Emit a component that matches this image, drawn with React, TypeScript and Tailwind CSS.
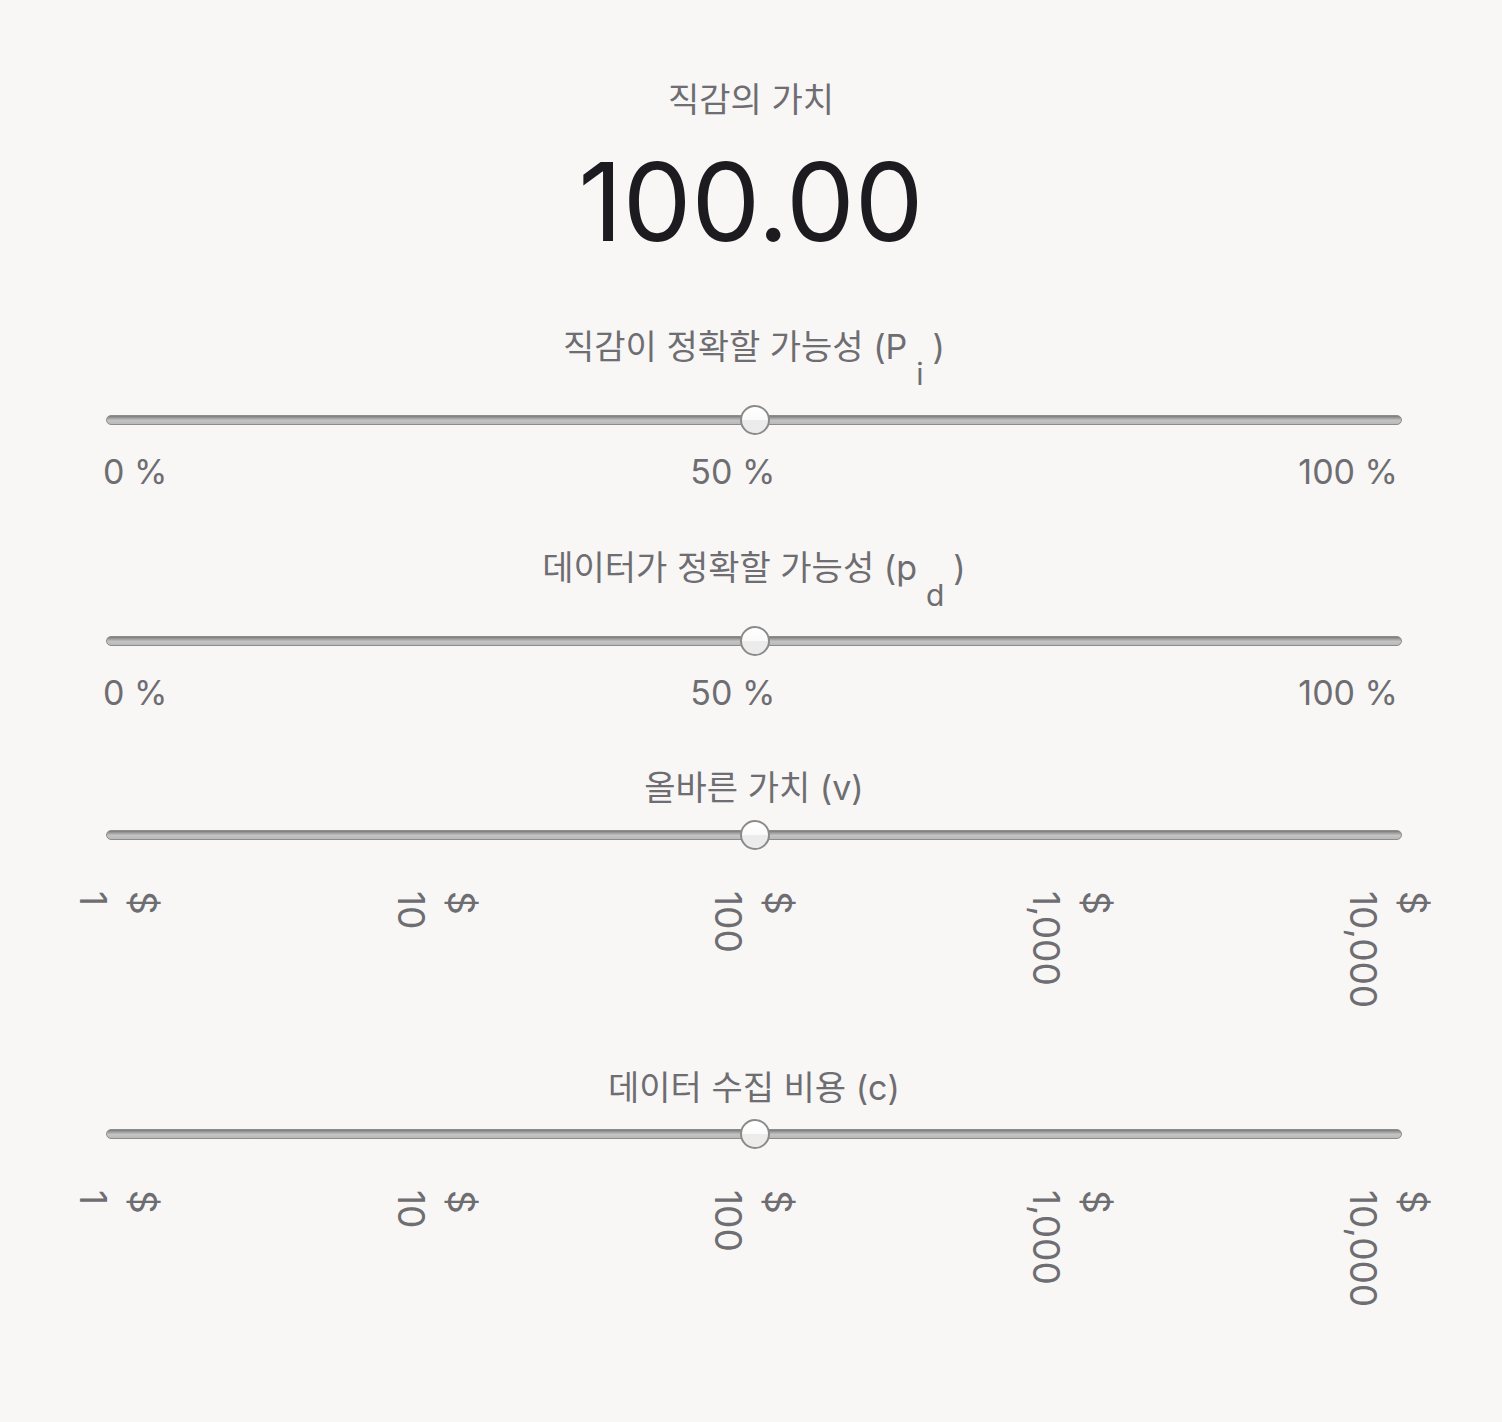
import React from 'react';

const font = { fontFamily: 'Inter, "Noto Sans CJK KR", sans-serif' };

function Track() {
  return (
    <div className="relative h-[30px] flex items-center">
      <div className="w-full h-[10px] rounded-full border border-[#8c8c8c] bg-[linear-gradient(to_bottom,#7a7a7a_0%,#9e9e9e_25%,#c4c4c4_55%,#b9b9b9_100%)]" />
      {/* 손잡이 */}
      <div className="absolute left-1/2 top-0 -translate-x-[calc(50%-1px)] w-[30px] h-[30px] rounded-full border-2 border-[#8a8a8a] bg-[linear-gradient(to_bottom,#ffffff_0%,#fafafa_50%,#ebebeb_52%,#ececec_100%)]" />
    </div>
  );
}

function PercentTicks() {
  return (
    <div className="flex justify-between -ml-[3px] mr-[4px] mt-[10px] text-[34px] leading-[54px] text-[#6e6d72]">
      <span>0 %</span>
      <span>50 %</span>
      <span>100 %</span>
    </div>
  );
}

function DollarTicks() {
  const values = ['1', '10', '100', '1,000', '10,000'];
  return (
    <div className="flex justify-between -ml-[38px] -mr-[36px] mt-[41px] text-[37px] leading-[50px] text-[#6e6d72]">
      {values.map((v) => (
        <div key={v} className="[writing-mode:vertical-rl] w-[100px]">
          $<br />
          {v}
        </div>
      ))}
    </div>
  );
}

function Label({ children }: { children: React.ReactNode }) {
  return <div className="text-center text-[34px] leading-[48px] text-[#6e6d72]">{children}</div>;
}

export default function App() {
  return (
    <div className="min-h-[1422px] bg-[#f8f7f5] pt-[76px]" style={font}>
      <div className="text-center text-[34px] leading-[48px] text-[#6e6d72]">직감의 가치</div>
      <div className="text-center text-[109px] leading-[112px] text-[#1c1b20] mt-[21px]">100.00</div>

      <div className="ml-[106px] w-[1296px] mt-[66px]">
        {/* Pi */}
        <Label>
          직감이 정확할 가능성 (P
          <span className="inline-block mx-[9px] text-[30px] align-[-26px] leading-[30px]">i</span>)
        </Label>
        <div className="mt-[16px]">
          <Track />
        </div>
        <PercentTicks />

        {/* pd */}
        <div className="mt-[45px]">
          <Label>
            데이터가 정확할 가능성 (p
            <span className="inline-block mx-[9px] text-[30px] align-[-26px] leading-[30px]">d</span>)
          </Label>
        </div>
        <div className="mt-[16px]">
          <Track />
        </div>
        <PercentTicks />

        {/* v */}
        <div className="mt-[44px]">
          <Label>올바른 가치 (v)</Label>
        </div>
        <div className="mt-[8px]">
          <Track />
        </div>
        <DollarTicks />

        {/* c */}
        <div className="mt-[56px]">
          <Label>데이터 수집 비용 (c)</Label>
        </div>
        <div className="mt-[7px]">
          <Track />
        </div>
        <DollarTicks />
      </div>
    </div>
  );
}
